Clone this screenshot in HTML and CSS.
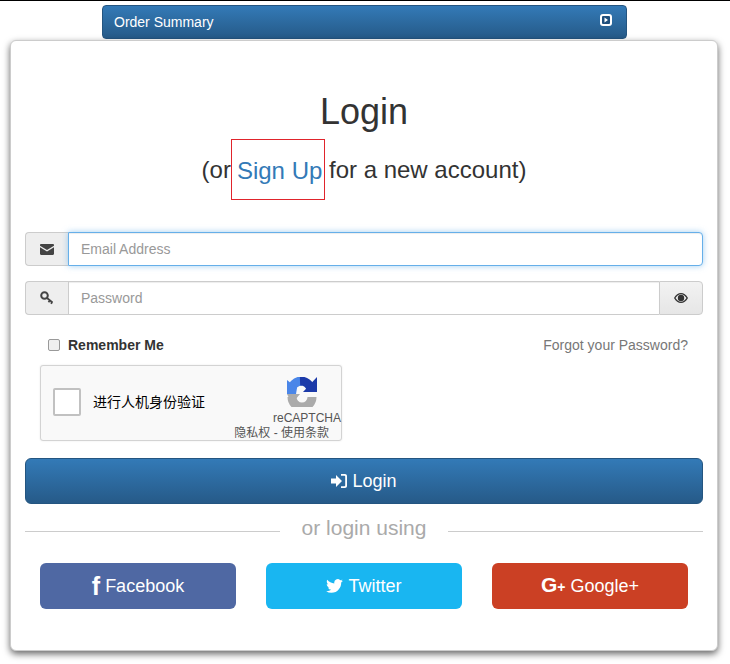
FILE: index.html
```html
<!DOCTYPE html>
<html>
<head>
  <title>Login</title>
  <meta name="viewport" content="width=device-width, initial-scale=1">
  <link rel="stylesheet" href="styles.css">
</head>
<body>
  <div class="summary-bar">
    <span>Order Summary</span>
    <svg class="summary-icon" viewBox="0 0 12 12"><rect width="12" height="12" rx="3" fill="#fff"/><rect x="2" y="2" width="8" height="8" rx="1" fill="#1f4f7d"/><path d="M4.5 3.5 8 6 4.5 8.5z" fill="#fff"/></svg>
  </div>

  <div class="login-card">
    <h1>Login</h1>
    <h2>(or<a class="signup" href="#">Sign Up</a> for a new account)</h2>

    <form>
      <div class="input-group">
        <span class="addon">
          <svg width="14" height="11" viewBox="0 0 14 11"><path d="M0 1.2C0 .5.5 0 1.2 0h11.6c.7 0 1.2.5 1.2 1.2v.5L7 6 0 1.7z" fill="#444"/><path d="M0 3.2 7 7.5l7-4.3v6.6c0 .7-.5 1.2-1.2 1.2H1.2C.5 11 0 10.500 0 9.800z" fill="#444"/></svg>
        </span>
        <input class="field focused" type="text" placeholder="Email Address">
      </div>

      <div class="input-group">
        <span class="addon">
          <svg width="14" height="14" viewBox="0 0 14 14"><circle cx="4.500" cy="4.500" r="3.300" fill="none" stroke="#444" stroke-width="2"/><path d="M7 7l5.500 4.500M10 9.300l-1.500 2M12.300 11l-1.300 1.800" fill="none" stroke="#444" stroke-width="1.800"/></svg>
        </span>
        <input class="field" type="password" placeholder="Password">
        <span class="addon addon-eye">
          <svg width="14" height="10" viewBox="0 0 14 10"><path d="M0 5c1.800-3.200 4.300-5 7-5s5.200 1.800 7 5c-1.800 3.200-4.300 5-7 5S1.800 8.200 0 5zm1.500 0C3 7.300 4.800 8.800 7 8.800s4-1.500 5.500-3.800C11 2.700 9.200 1.200 7 1.200S3 2.700 1.500 5z" fill="#333"/><circle cx="7" cy="5" r="3.200" fill="#333"/></svg>
        </span>
      </div>

      <div class="remember-row">
        <label class="remember"><input type="checkbox"> Remember Me</label>
        <a class="forgot" href="#">Forgot your Password?</a>
      </div>

      <div class="captcha">
        <div class="captcha-main">
          <span class="captcha-box"></span>
          <span class="captcha-label">进行人机身份验证</span>
          <div class="captcha-brand">
            <svg class="captcha-logo" width="30" height="30" viewBox="0 0 30 30">
              <path d="M25 20A10 10 0 0 1 5 20" fill="none" stroke="#ababab" stroke-width="9"/>
              <path d="M0 17h13l-5 6 4 2-7 2z" fill="#ababab"/>
              <path d="M16 4A11 11 0 0 0 4 16" fill="none" stroke="#4a86e8" stroke-width="9"/>
              <path d="M0 3 0 17 9 17 10 11z" fill="#4a86e8"/>
              <path d="M13 4A11 11 0 0 1 24 12" fill="none" stroke="#1c3aa9" stroke-width="9"/>
              <path d="M30 0 30 15 16 15z" fill="#1c3aa9"/>
            </svg>
            <span class="captcha-name">reCAPTCHA</span>
          </div>
        </div>
        <div class="captcha-terms">隐私权 - 使用条款</div>
      </div>

      <button class="btn-login" type="button">
        <svg width="16" height="14" viewBox="0 0 16 14"><path d="M0 4.500h5V1l6 6-6 6V9.500H0z" fill="#fff"/><path d="M10 0h4c1.100 0 2 .9 2 2v10c0 1.100-.9 2-2 2h-4v-1.800h3.500c.4 0 .7-.3.7-.7V2.500c0-.4-.3-.7-.7-.7H10z" fill="#fff"/></svg>
        Login
      </button>
    </form>

    <div class="divider"><span>or login using</span></div>

    <div class="social">
      <a class="social-btn facebook" href="#"><b class="fb-mark">f</b> Facebook</a>
      <a class="social-btn twitter" href="#">
        <svg width="17" height="14" viewBox="0 0 24 20"><path d="M23.950 2.570a10 10 0 0 1-2.820.780 4.960 4.960 0 0 0 2.160-2.730c-.950.560-2 .960-3.130 1.190a4.920 4.920 0 0 0-8.380 4.480C7.690 6.100 4.070 4.130 1.640 1.160a4.820 4.820 0 0 0-.67 2.480c0 1.710.87 3.210 2.190 4.090a4.900 4.900 0 0 1-2.230-.61v.06a4.920 4.920 0 0 0 3.950 4.820 5 5 0 0 1-2.210.09 4.940 4.940 0 0 0 4.600 3.420 9.870 9.870 0 0 1-6.100 2.100c-.39 0-.78-.02-1.170-.06a14 14 0 0 0 7.560 2.210c9.050 0 14-7.500 14-13.990 0-.21 0-.42-.02-.63A9.940 9.940 0 0 0 24 2.590z" fill="#fff"/></svg>
        Twitter
      </a>
      <a class="social-btn google" href="#"><b class="gp-mark">G<small>+</small></b> Google+</a>
    </div>
  </div>
</body>
</html>
```

FILE: styles.css
```css
* {
  box-sizing: border-box;
}
body {
  margin: 0;
  height: 664px;
  overflow: hidden;
  font-family: "Liberation Sans", Arial, sans-serif;
  font-size: 14px;
  color: #333;
  background-color: #fff;
  border-top: 1px solid #000;
}
a {
  text-decoration: none;
}
.summary-bar {
  display: flex;
  justify-content: space-between;
  align-items: center;
  width: 525px;
  height: 34px;
  margin: 4px 0 1px 102px;
  padding: 0 14px 0 11px;
  color: #fff;
  background: linear-gradient(to bottom, #337ab7, #265a88);
  border: 1px solid #245580;
  border-radius: 4px;
}
.summary-icon {
  width: 12px;
  height: 12px;
  margin-top: -4px;
}
.login-card {
  width: 708px;
  height: 611px;
  margin-left: 10px;
  padding: 0 14px;
  background: #fff;
  border: 1px solid #ccc;
  border-radius: 6px;
  box-shadow: 0 3px 7px rgba(0,0,0,0.6);
}
h1 {
  margin: 51px 0 0;
  height: 40px;
  font-size: 36px;
  font-weight: 400;
  line-height: 40px;
  text-align: center;
}
h2 {
  margin: 7px 0 31px;
  height: 62px;
  font-size: 24px;
  font-weight: 400;
  line-height: 61px;
  text-align: center;
}
.signup {
  display: inline-block;
  height: 61px;
  margin-right: -3px;
  padding: 0 2px 0 5px;
  color: #337ab7;
  border: 1px solid #e0242c;
  vertical-align: top;
}
.input-group {
  display: flex;
  height: 34px;
  margin-bottom: 15px;
}
.addon {
  display: flex;
  align-items: center;
  justify-content: center;
  flex: 0 0 43px;
  background: #eee;
  border: 1px solid #ccc;
  border-right: none;
  border-radius: 4px 0 0 4px;
}
.addon-eye {
  flex-basis: 44px;
  background: linear-gradient(to bottom, #f2f2f2, #e6e6e6);
  border: 1px solid #ccc;
  border-radius: 0 4px 4px 0;
}
.field {
  flex: 1;
  min-width: 0;
  padding: 6px 12px;
  font-family: inherit;
  font-size: 14px;
  color: #555;
  background: #fff;
  border: 1px solid #ccc;
  border-radius: 0;
  outline: none;
  box-shadow: inset 0 1px 1px rgba(0,0,0,0.075);
}
.field:not(:last-child) {
  border-right: none;
}
.field::placeholder {
  color: #999;
}
.focused {
  border-color: #66afe9;
  border-radius: 0 4px 4px 0;
  box-shadow: inset 0 1px 1px rgba(0,0,0,0.075), 0 0 6px rgba(102,175,233,0.6);
}
.remember-row {
  display: flex;
  justify-content: space-between;
  align-items: center;
  height: 20px;
  margin: 20px 15px 10px 23px;
}
.remember {
  display: flex;
  align-items: center;
  gap: 8px;
  font-weight: 700;
}
.remember input {
  appearance: none;
  width: 12px;
  height: 12px;
  margin: 0;
  background: #f0f0f0;
  border: 1px solid #999;
  border-radius: 2px;
}
.forgot {
  color: #777;
}
.captcha {
  display: flex;
  flex-direction: column;
  width: 302px;
  height: 76px;
  margin-left: 15px;
  background: #f9f9f9;
  border: 1px solid #d3d3d3;
  border-radius: 3px;
  box-shadow: 0 0 2px rgba(0,0,0,0.1);
}
.captcha-main {
  display: flex;
  align-items: flex-start;
  flex: 1;
  padding-left: 12px;
}
.captcha-box {
  flex: 0 0 28px;
  height: 28px;
  margin-top: 22px;
  background: #fff;
  border: 2px solid #c1c1c1;
  border-radius: 2px;
}
.captcha-label {
  margin: 27px 0 0 12px;
  font-family: "Liberation Sans", "Noto Sans CJK SC", sans-serif;
  font-size: 14px;
  line-height: 18px;
  color: #000;
}
.captcha-brand {
  display: flex;
  flex-direction: column;
  align-items: center;
  width: 68px;
  margin-left: auto;
  padding-top: 11px;
}
.captcha-logo {
  align-self: flex-start;
  margin-left: 14px;
}
.captcha-name {
  margin-top: 4px;
  font-size: 12px;
  line-height: 14px;
  color: #555;
}
.captcha-terms {
  height: 14px;
  padding-right: 12px;
  font-family: "Liberation Sans", "Noto Sans CJK SC", sans-serif;
  font-size: 12px;
  line-height: 14px;
  text-align: right;
  color: #555;
}
.btn-login {
  display: flex;
  align-items: center;
  justify-content: center;
  gap: 5px;
  width: 100%;
  height: 46px;
  margin-top: 17px;
  font-family: inherit;
  font-size: 18px;
  color: #fff;
  background: linear-gradient(to bottom, #337ab7, #265a88);
  border: 1px solid #245580;
  border-radius: 6px;
}
.divider {
  display: flex;
  align-items: center;
  height: 24px;
  margin-top: 12px;
  font-size: 21px;
  color: #aaa;
}
.divider::before,
.divider::after {
  content: "";
  flex: 1;
  height: 1px;
  margin-top: 6px;
  background: #ccc;
}
.divider span {
  padding: 0 22px;
}
.social {
  display: flex;
  gap: 30px;
  margin: 23px 15px 0;
}
.social-btn {
  display: flex;
  align-items: center;
  justify-content: center;
  gap: 5px;
  flex: 1;
  height: 46px;
  font-size: 18px;
  color: #fff;
  border-radius: 6px;
}
.facebook {
  background: #4f68a3;
}
.twitter {
  background: #19b6f1;
}
.google {
  background: #cb4024;
}
.fb-mark {
  font-size: 25px;
  font-weight: 700;
  line-height: 22px;
}
.gp-mark {
  font-size: 21px;
  line-height: 22px;
}
.gp-mark small {
  font-size: 14px;
}
```
